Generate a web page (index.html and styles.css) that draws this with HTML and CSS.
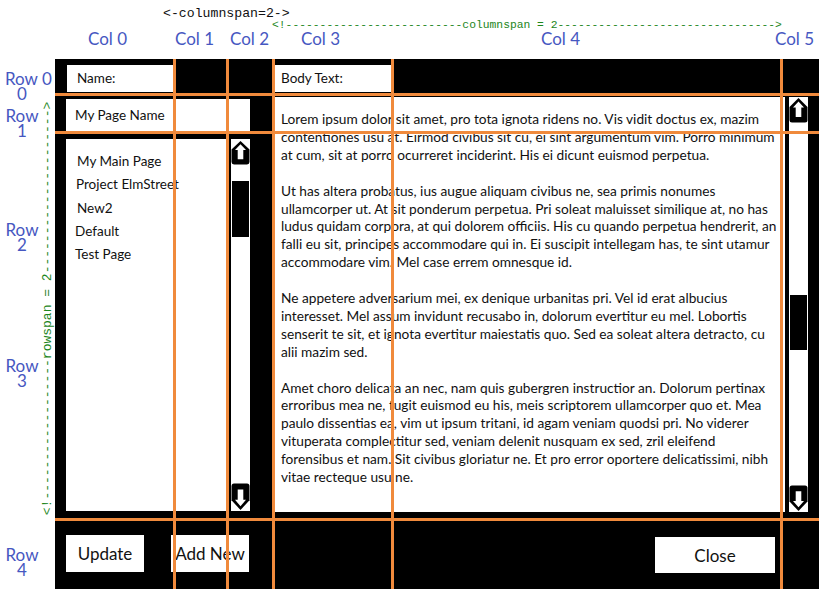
FILE: index.html
```html
<!DOCTYPE html>
<html lang="en">
<head>
<meta charset="utf-8">
<title>Grid layout</title>
<link rel="stylesheet" href="styles.css">
</head>
<body>
<div class="canvas">
  <div class="ann cs-black">&lt;-columnspan=2-&gt;</div>
  <div class="ann cs-green">&lt;!--------------------------columnspan = 2--------------------------------&gt;</div>
  <div class="ann rs-green">&lt;!------------------rowspan = 2---------------------&gt;</div>

  <div class="col-label c0">Col 0</div>
  <div class="col-label c1">Col 1</div>
  <div class="col-label c2">Col 2</div>
  <div class="col-label c3">Col 3</div>
  <div class="col-label c4">Col 4</div>
  <div class="col-label c5">Col 5</div>

  <div class="row-label r0"><span class="first">Row 0</span><span>0</span></div>
  <div class="row-label r1"><span>Row</span><span>1</span></div>
  <div class="row-label r2"><span>Row</span><span>2</span></div>
  <div class="row-label r3"><span>Row</span><span>3</span></div>
  <div class="row-label r4"><span>Row</span><span>4</span></div>

  <div class="panel">
    <div class="label lbl-name">Name:</div>
    <div class="label lbl-body">Body Text:</div>
    <div class="name-box">My Page Name</div>

    <div class="list">
      <ul class="list-items">
        <li class="i1">My Main Page</li>
        <li class="i2">Project ElmStreet</li>
        <li class="i3">New2</li>
        <li class="i4">Default</li>
        <li class="i5">Test Page</li>
      </ul>
      <div class="track track-left">
        <svg class="arrow up" viewBox="0 0 19 26" preserveAspectRatio="none"><path d="M9.5 1 L18.5 10 V23 Q18.5 25.5 16 25.5 H3 Q0.5 25.5 0.5 23 V10 Z" fill="#000"/><path d="M9.5 4.5 L15 10.5 H12.3 V20 H6.7 V10.5 H4 Z" fill="#fff"/></svg>
        <div class="thumb"></div>
        <svg class="arrow down" viewBox="0 0 19 26" preserveAspectRatio="none"><path d="M9.5 25 L18.5 16 V3 Q18.5 0.5 16 0.5 H3 Q0.5 0.5 0.5 3 V16 Z" fill="#000"/><path d="M9.5 21.5 L15 15.5 H12.3 V6 H6.7 V15.5 H4 Z" fill="#fff"/></svg>
      </div>
    </div>

    <div class="textarea">
      <div class="text">
        <p>Lorem ipsum dolor sit amet, pro tota ignota ridens no. Vis vidit doctus ex, mazim<br>contentiones usu at. Eirmod civibus sit cu, ei sint argumentum vim. Porro minimum<br>at cum, sit at porro ocurreret inciderint. His ei dicunt euismod perpetua.</p>
        <p>Ut has altera probatus, ius augue aliquam civibus ne, sea primis nonumes<br>ullamcorper ut. At sit ponderum perpetua. Pri soleat maluisset similique at, no has<br>ludus quidam corpora, at qui dolorem officiis. His cu quando perpetua hendrerit, an<br>falli eu sit, principes accommodare qui in. Ei suscipit intellegam has, te sint utamur<br>accommodare vim. Mel case errem omnesque id.</p>
        <p>Ne appetere adversarium mei, ex denique urbanitas pri. Vel id erat albucius<br>interesset. Mel assum invidunt recusabo in, dolorum evertitur eu mel. Lobortis<br>senserit te sit, et ignota evertitur maiestatis quo. Sed ea soleat altera detracto, cu<br>alii mazim sed.</p>
        <p>Amet choro delicata an nec, nam quis gubergren instructior an. Dolorum pertinax<br>erroribus mea ne, fugit euismod eu his, meis scriptorem ullamcorper quo et. Mea<br>paulo dissentias ea, vim ut ipsum tritani, id agam veniam quodsi pri. No viderer<br>vituperata complectitur sed, veniam delenit nusquam ex sed, zril eleifend<br>forensibus et nam. Sit civibus gloriatur ne. Et pro error oportere delicatissimi, nibh<br>vitae recteque usu ne.</p>
      </div>
      <div class="track track-right">
        <svg class="arrow up" viewBox="0 0 19 26" preserveAspectRatio="none"><path d="M9.5 1 L18.5 10 V23 Q18.5 25.5 16 25.5 H3 Q0.5 25.5 0.5 23 V10 Z" fill="#000"/><path d="M9.5 4.5 L15 10.5 H12.3 V20 H6.7 V10.5 H4 Z" fill="#fff"/></svg>
        <div class="thumb"></div>
        <svg class="arrow down" viewBox="0 0 19 26" preserveAspectRatio="none"><path d="M9.5 25 L18.5 16 V3 Q18.5 0.5 16 0.5 H3 Q0.5 0.5 0.5 3 V16 Z" fill="#000"/><path d="M9.5 21.5 L15 15.5 H12.3 V6 H6.7 V15.5 H4 Z" fill="#fff"/></svg>
      </div>
    </div>

    <div class="buttons-left">
      <button class="btn">Update</button>
      <button class="btn">Add New</button>
    </div>
    <button class="btn btn-close">Close</button>
  </div>

  <div class="guide gv v1"></div>
  <div class="guide gv v2"></div>
  <div class="guide gv v3"></div>
  <div class="guide gv v4"></div>
  <div class="guide gv v5"></div>
  <div class="guide gh h1"></div>
  <div class="guide gh h2"></div>
  <div class="guide gh h3"></div>
</div>
</body>
</html>
```
FILE: styles.css
```css
html, body {
  margin: 0;
  padding: 0;
  background: #fff;
}
body {
  width: 819px;
  height: 589px;
  overflow: hidden;
  font-family: Lato, "Open Sans", sans-serif;
  color: #111;
}
.canvas {
  position: relative;
  width: 819px;
  height: 589px;
  display: grid;
  grid-template-columns: 55px 1fr;
  grid-template-rows: 59px 1fr;
}

/* annotations */
.ann {
  position: absolute;
  font-family: "Liberation Mono", "DejaVu Sans Mono", monospace;
  white-space: nowrap;
}
.cs-black {
  left: 163px;
  top: 6px;
  font-size: 13.2px;
  line-height: 15px;
  color: #111;
}
.cs-green {
  left: 272px;
  top: 18.5px;
  font-size: 11.33px;
  line-height: 13px;
  color: #1c861c;
}
.rs-green {
  left: -159.2px;
  top: 300.5px;
  width: 413.4px;
  font-size: 13px;
  line-height: 15px;
  color: #1c861c;
  transform: rotate(-90deg);
  transform-origin: 50% 50%;
}
.col-label, .row-label {
  position: absolute;
  font-size: 17px;
  color: #4657c1;
  white-space: nowrap;
}
.col-label {
  top: 29.4px;
  line-height: 20px;
}
.c0 { left: 88px; }
.c1 { left: 175px; }
.c2 { left: 230px; }
.c3 { left: 301px; }
.c4 { left: 541px; }
.c5 { left: 775px; }

.row-label {
  left: 5px;
  width: 34px;
  line-height: 15px;
  text-align: center;
  display: flex;
  flex-direction: column;
}
.row-label .first { text-align: left; }
.r0 { top: 70.9px; }
.r1 { top: 108.2px; }
.r2 { top: 221.9px; }
.r3 { top: 358.2px; }
.r4 { top: 546.6px; }

/* panel */
.panel {
  grid-column: 2;
  grid-row: 2;
  background: #000;
  display: grid;
  grid-template-columns: 184px 534px;
  grid-template-rows: 32px 42px 373px 1fr;
  column-gap: 25px;
  padding: 6px 0 0 11px;
  font-size: 13.5px;
}
.label {
  background: #fff;
  height: 27px;
  line-height: 27px;
  align-self: start;
  white-space: nowrap;
}
.lbl-name {
  grid-column: 1;
  grid-row: 1;
  width: 98px;
  margin-left: 1px;
  padding-left: 10px;
}
.lbl-body {
  grid-column: 2;
  grid-row: 1;
  width: 110px;
  padding-left: 6px;
}
.name-box {
  grid-column: 1;
  grid-row: 2;
  align-self: start;
  margin-top: 2px;
  height: 32px;
  line-height: 32px;
  padding-left: 9px;
  background: #fff;
}

.list {
  grid-column: 1;
  grid-row: 3;
  height: 372px;
  display: flex;
  gap: 3px;
}
.list-items {
  flex: 1;
  margin: 0;
  padding: 11px 0 0 11px;
  list-style: none;
  background: #fff;
  line-height: 23.3px;
}
.list-items .i2 { margin-left: -1px; }
.list-items .i4, .list-items .i5 { margin-left: -2px; }

.track {
  width: 19px;
  background: #fff;
  display: flex;
  flex-direction: column;
  align-items: center;
}
.arrow {
  display: block;
  width: 19px;
}
.thumb {
  width: 17px;
  background: #000;
}
.track-left { padding-top: 1px; }
.track-left .arrow.up { height: 25px; }
.track-left .thumb { margin-top: 16px; height: 56px; }
.track-left .arrow.down { height: 28px; margin-top: auto; }
.track-right .arrow.up { height: 26px; }
.track-right .thumb { margin-top: 172px; height: 55px; }
.track-right .arrow.down { height: 27px; margin-top: auto; }

.textarea {
  grid-column: 2;
  grid-row: 2 / span 2;
  height: 415px;
  width: 533px;
  display: flex;
  gap: 4px;
}
.text {
  width: 510px;
  background: #fff;
  overflow: hidden;
  white-space: nowrap;
  padding-top: 13px;
  padding-left: 6px;
  box-sizing: border-box;
  font-size: 13.7px;
  line-height: 17.9px;
}
.text p {
  margin: 0 0 17.9px;
}

.buttons-left {
  grid-column: 1;
  grid-row: 4;
  width: 183px;
  display: flex;
  justify-content: space-between;
  align-self: start;
  margin-top: 23px;
}
.btn {
  font-family: Lato, "Open Sans", sans-serif;
  font-size: 17px;
  color: #111;
  background: #fff;
  border: 0;
  border-radius: 0;
  padding: 0;
  width: 78px;
  height: 37px;
  white-space: nowrap;
  display: flex;
  align-items: center;
  justify-content: center;
}
.btn-close {
  grid-column: 2;
  grid-row: 4;
  justify-self: end;
  align-self: start;
  margin-top: 25px;
  margin-right: 34px;
  width: 120px;
  height: 36px;
}

/* orange guide lines over the layout */
.guide {
  position: absolute;
  background: #f08a3c;
}
.gv { top: 59px; bottom: 0; width: 3px; }
.gh { left: 55px; right: 0; height: 3px; }
.v1 { left: 173px; }
.v2 { left: 226px; }
.v3 { left: 272px; }
.v4 { left: 391px; }
.v5 { left: 780px; }
.h1 { top: 93px; }
.h2 { top: 131px; }
.h3 { top: 518px; }
```
